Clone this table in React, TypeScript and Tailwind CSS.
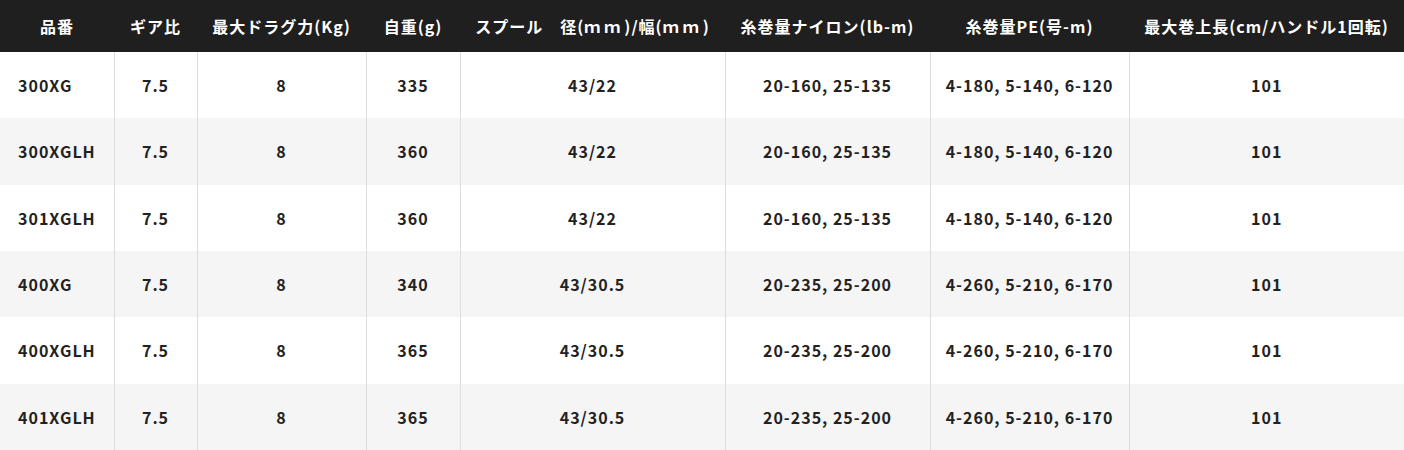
import React from "react";

const M = () => <span className="tracking-[4px]">ｍｍ</span>;

const headers: React.ReactNode[] = [
  "品番",
  "ギア比",
  "最大ドラグ力(Kg)",
  "自重(g)",
  <>
    スプール　径(<M />)/幅(<M />)
  </>,
  "糸巻量ナイロン(lb-m)",
  "糸巻量PE(号-m)",
  "最大巻上長(cm/ハンドル1回転)",
];

const widths = [114, 83, 169, 94, 265, 205, 199, 275];

const rows = [
  ["300XG", "7.5", "8", "335", "43/22", "20-160, 25-135", "4-180, 5-140, 6-120", "101"],
  ["300XGLH", "7.5", "8", "360", "43/22", "20-160, 25-135", "4-180, 5-140, 6-120", "101"],
  ["301XGLH", "7.5", "8", "360", "43/22", "20-160, 25-135", "4-180, 5-140, 6-120", "101"],
  ["400XG", "7.5", "8", "340", "43/30.5", "20-235, 25-200", "4-260, 5-210, 6-170", "101"],
  ["400XGLH", "7.5", "8", "365", "43/30.5", "20-235, 25-200", "4-260, 5-210, 6-170", "101"],
  ["401XGLH", "7.5", "8", "365", "43/30.5", "20-235, 25-200", "4-260, 5-210, 6-170", "101"],
];

export default function App() {
  return (
    <div
      className="w-[1404px] h-[450px] bg-white overflow-hidden text-[#222]"
      style={{ fontFamily: '"Noto Sans CJK JP", "Noto Sans", sans-serif' }}
    >
      <table className="w-[1404px] table-fixed border-collapse">
        <colgroup>
          {widths.map((w, i) => (
            <col key={i} style={{ width: w }} />
          ))}
        </colgroup>
        <thead>
          <tr className="h-[52px] bg-[#1f1f1f]">
            {headers.map((h, i) => (
              <th
                key={i}
                className="text-white text-[16px] tracking-[1px] font-bold text-center p-0 whitespace-nowrap"
              >
                {h}
              </th>
            ))}
          </tr>
        </thead>
        <tbody>
          {rows.map((r, ri) => (
            <tr key={ri} className={ri % 2 === 1 ? "h-[66.33px] bg-[#f5f5f5]" : "h-[66.33px] bg-white"}>
              {r.map((c, ci) => (
                <td
                  key={ci}
                  className={
                    ci === 0
                      ? "pl-[18px] text-left text-[16px] tracking-[1px] font-bold p-0 whitespace-nowrap"
                      : "border-l border-[#dddddd] text-center text-[16px] tracking-[1px] font-bold p-0 whitespace-nowrap"
                  }
                >
                  {c}
                </td>
              ))}
            </tr>
          ))}
        </tbody>
      </table>
    </div>
  );
}
